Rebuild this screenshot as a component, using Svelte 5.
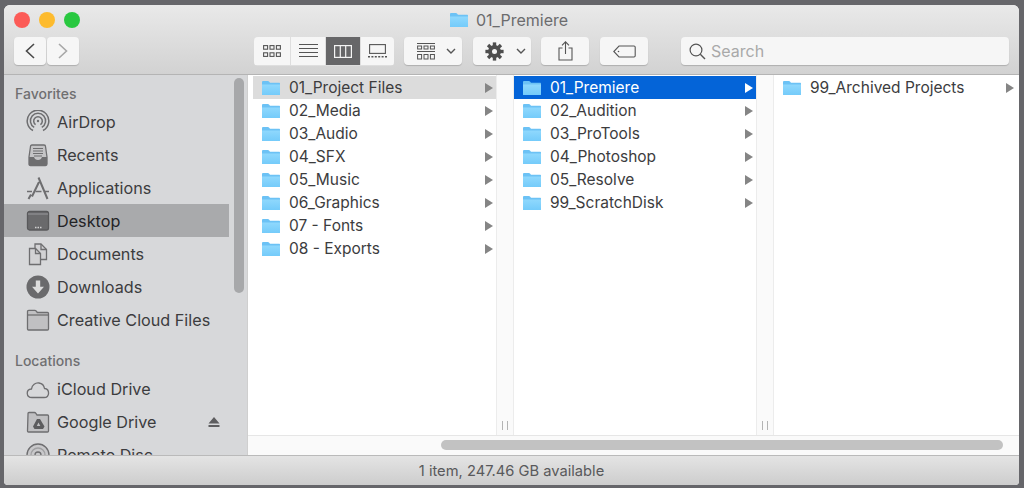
<script>
  const col1 = ["01_Project Files", "02_Media", "03_Audio", "04_SFX", "05_Music", "06_Graphics", "07 - Fonts", "08 - Exports"];
  const col2 = ["01_Premiere", "02_Audition", "03_ProTools", "04_Photoshop", "05_Resolve", "99_ScratchDisk"];
  const col3 = ["99_Archived Projects"];
  const columns = [
    { items: col1, sel: 0, cls: "gray" },
    { items: col2, sel: 0, cls: "blue" },
    { items: col3, sel: -1, cls: "" },
  ];
  const favorites = [
    { name: "AirDrop", icon: "airdrop" },
    { name: "Recents", icon: "recents" },
    { name: "Applications", icon: "apps" },
    { name: "Desktop", icon: "desktop", active: true },
    { name: "Documents", icon: "docs" },
    { name: "Downloads", icon: "down" },
    { name: "Creative Cloud Files", icon: "folder" },
  ];
  const locations = [
    { name: "iCloud Drive", icon: "cloud" },
    { name: "Google Drive", icon: "gdrive", eject: true },
    { name: "Remote Disc", icon: "disc" },
  ];
</script>

{#snippet folder()}
  <svg class="folder" width="20" height="16" viewBox="0 0 20 16">
    <defs>
      <linearGradient id="fg" x1="0" y1="0" x2="0" y2="1">
        <stop offset="0" stop-color="#8fd8fd" />
        <stop offset="1" stop-color="#74cbfa" />
      </linearGradient>
    </defs>
    <path d="M1 2.2C1 1.4 1.5 1 2.2 1h4.6c.7 0 1 .3 1.4 .8L9 2.8h9c.7 0 1 .4 1 1V14c0 .7-.4 1-1 1H2c-.7 0-1-.4-1-1z" fill="#6cc2f5" />
    <path d="M1 4.6h18V14c0 .7-.4 1-1 1H2c-.7 0-1-.4-1-1z" fill="url(#fg)" />
  </svg>
{/snippet}

{#snippet sideIcon(kind)}
  <svg class="sicon" width="24" height="24" viewBox="0 0 24 24" fill="none" stroke="#6e6e70" stroke-width="1.3">
    {#if kind === "airdrop"}
      <path d="M7 20.5A10.8 10.8 0 1 1 17 20.5" stroke-width="1.5" />
      <path d="M8.2 17.4A7.6 7.6 0 1 1 15.8 17.4" stroke-width="1.5" />
      <path d="M9.6 14.6A4.3 4.3 0 1 1 14.4 14.6" stroke-width="1.5" />
      <circle cx="12" cy="11" r="1.2" fill="#6e6e70" stroke="none" />
    {:else if kind === "recents"}
      <path d="M4.5 3.5c0-1 .5-1.5 1.5-1.5h12c1 0 1.5 .5 1.5 1.5L21 14v7c0 1-.5 1.5-1.5 1.5h-15C3.500 22.500 3 22 3 21v-7z" fill="#c4c4c6" />
      <path d="M3 14h5c.5 2 2 3 4 3s3.500-1 4-3h5v7c0 1-.5 1.500-1.500 1.500h-15C3.500 22.500 3 22 3 21z" fill="#6e6e70" stroke="none" />
      <path d="M7 5.500h10M7 8h10M7 10.500h10M8 13h8" stroke-width="1.1" />
    {:else if kind === "apps"}
      <path d="M12.500 1.500 21.500 23M13 6 6 20.500M2.500 23 5 18.500" stroke-width="2" />
      <path d="M1 15.500h5M9.500 15.500h6M18 15.500h5" stroke-width="1.6" />
    {:else if kind === "desktop"}
      <rect x="1.500" y="2.500" width="21" height="18.500" rx="2" fill="#6a6a6c" stroke="#59595b" />
      <path d="M2 5h20" stroke="#8a8a8c" />
      <path d="M9 18.500h1.500M11.500 18.500H13M14 18.500h1.500" stroke="#d0d0d0" stroke-width="1.600" />
    {:else if kind === "docs"}
      <path d="M9 2h6l5.500 5.500V17.500H9z" fill="#d2d2d4" />
      <path d="M15 2v5.500h5.500" />
      <path d="M3.500 6.500h6L14.500 11.500V22.500H3.500z" fill="#d2d2d4" />
      <path d="M9.500 6.500v5h5" />
    {:else if kind === "down"}
      <circle cx="12" cy="12" r="11.500" fill="#6a6a6c" stroke="none" />
      <path d="M9.800 5.500h4.400v6.300H18L12 18.500 6 11.800h3.800z" fill="#dcdcdc" stroke="none" />
    {:else if kind === "folder"}
      <path d="M1.500 5V3.500c0-.8 .4-1.200 1.200-1.200h6c.8 0 1.200 .3 1.600 .8l1 1.400h10.200c.7 0 1 .4 1 1V21c0 .7-.4 1-1 1H2.500c-.7 0-1-.4-1-1z" fill="#c0c0c2" />
      <path d="M1.500 7h21" />
    {:else if kind === "cloud"}
      <path d="M6 20.500c-6 0-6.500-8-.5-8.500C6 8 9.500 5.500 13 6c3 .4 5 2.500 5.500 5.500 5.500 .5 5.500 9-.5 9z" />
    {:else if kind === "gdrive"}
      <path d="M2 4.500V3.500c0-.7 .4-1 1-1h5.500c.7 0 1 .3 1.400 .8L11 5h10.500c.7 0 1 .4 1 1v15c0 .7-.4 1-1 1h-19c-.7 0-1-.4-1-1z" fill="#c0c0c2" />
      <path d="M11 9h3l4.500 7.500-1.500 2.500H8.500L7 16.500z" fill="#5c5c5e" stroke="none" />
      <path d="M12.500 12.500 10.800 16h3.500z" fill="#c0c0c2" stroke="none" />
    {:else}
      <circle cx="12" cy="12" r="11" fill="#c8c8ca" />
      <circle cx="12" cy="12" r="7" stroke="#a0a0a2" />
      <circle cx="12" cy="12" r="3" />
    {/if}
  </svg>
{/snippet}

{#snippet sideRow(item)}
  <div class="side-row" class:active={item.active}>
    {@render sideIcon(item.icon)}
    <span>{item.name}</span>
    {#if item.eject}
      <svg class="eject" width="12" height="12" viewBox="0 0 12 12"><path d="M6 1 11.500 7.500H.5zM.5 9h11v2H.5z" fill="#5e5e60" /></svg>
    {/if}
  </div>
{/snippet}

<div class="window">
  <header>
    <div class="lights">
      <i class="red"></i><i class="yellow"></i><i class="green"></i>
    </div>
    <div class="title">
      {@render folder()}
      <span>01_Premiere</span>
    </div>
    <div class="toolbar">
      <div class="nav">
        <button class="tb back" aria-label="Back">
          <svg width="12" height="16" viewBox="0 0 12 16"><path d="M10 1 2.500 8 10 15" fill="none" stroke="#4a4a4a" stroke-width="1.600" /></svg>
        </button>
        <button class="tb fwd" aria-label="Forward">
          <svg width="12" height="16" viewBox="0 0 12 16"><path d="M2 1 9.500 8 2 15" fill="none" stroke="#a8a8a8" stroke-width="1.600" /></svg>
        </button>
      </div>
      <div class="views">
        <button class="view" aria-label="Icons">
          <svg width="18" height="12" viewBox="0 0 18 12" fill="none" stroke="#555" stroke-width="1.100">
            <rect x=".6" y=".6" width="4" height="3.600" /><rect x="7" y=".6" width="4" height="3.600" /><rect x="13.400" y=".6" width="4" height="3.600" />
            <rect x=".6" y="7.800" width="4" height="3.600" /><rect x="7" y="7.800" width="4" height="3.600" /><rect x="13.400" y="7.800" width="4" height="3.600" />
          </svg>
        </button>
        <button class="view" aria-label="List">
          <svg width="19" height="14" viewBox="0 0 19 14" stroke="#555" stroke-width="1"><path d="M0 .5h19M0 4.500h19M0 8.500h19M0 12.500h19" /></svg>
        </button>
        <button class="view on" aria-label="Columns">
          <svg width="18" height="13" viewBox="0 0 18 13" fill="none" stroke="#f4f4f4" stroke-width="1.200"><rect x=".6" y=".6" width="16.800" height="11.800" /><path d="M6.300 .6v11.800M11.700 .6v11.800" /></svg>
        </button>
        <button class="view" aria-label="Gallery">
          <svg width="19" height="14" viewBox="0 0 19 14" fill="none" stroke="#555" stroke-width="1.100"><rect x="1.600" y=".6" width="15.800" height="8.800" /><path d="M0 12.800h2M3.400 12.800h2M6.800 12.800h2M10.200 12.800h2M13.600 12.800h2M17 12.800h2" stroke-width="1.600" /></svg>
        </button>
      </div>
      <button class="tb arrange" aria-label="Arrange">
        <svg width="18" height="17" viewBox="0 0 18 17" fill="none" stroke="#555" stroke-width="1"><path d="M0 .5h18M0 8.500h18" /><rect x=".6" y="3" width="4" height="3" /><rect x="7" y="3" width="4" height="3" /><rect x="13.400" y="3" width="4" height="3" /><rect x=".6" y="11.500" width="4" height="4.500" /><rect x="7" y="11.500" width="4" height="4.500" /><rect x="13.400" y="11.500" width="4" height="4.500" /></svg>
        <svg class="chev" width="10" height="6" viewBox="0 0 10 6"><path d="M1 1l4 4 4-4" fill="none" stroke="#555" stroke-width="1.400" /></svg>
      </button>
      <button class="tb gear" aria-label="Action">
        <svg width="19" height="19" viewBox="0 0 19 19">
          <g fill="#4e4e4e">
            <circle cx="9.500" cy="9.500" r="6.500" />
            {#each [0, 45, 90, 135, 180, 225, 270, 315] as a}
              <rect x="7.800" y=".4" width="3.400" height="4" transform="rotate({a} 9.500 9.500)" />
            {/each}
          </g>
          <circle cx="9.500" cy="9.500" r="2.500" fill="#f4f4f4" />
        </svg>
        <svg class="chev" width="10" height="6" viewBox="0 0 10 6"><path d="M1 1l4 4 4-4" fill="none" stroke="#555" stroke-width="1.400" /></svg>
      </button>
      <button class="tb share" aria-label="Share">
        <svg width="15" height="20" viewBox="0 0 15 20" fill="none" stroke="#555" stroke-width="1.100"><path d="M4.500 7H1v12h13V7h-3.500M7.500 13V1M4 4.300 7.500 .8 11 4.300" /></svg>
      </button>
      <button class="tb tag" aria-label="Tags">
        <svg width="23" height="13" viewBox="0 0 23 13" fill="none" stroke="#555" stroke-width="1.100"><path d="M6 1h15c.7 0 1.200 .5 1.200 1.200v8.600c0 .7-.5 1.200-1.200 1.200H6L.8 6.500z" /><circle cx="5.500" cy="6.500" r=".8" fill="#555" stroke="none" /></svg>
      </button>
      <div class="search">
        <svg width="17" height="17" viewBox="0 0 17 17" fill="none" stroke="#555" stroke-width="1.200"><circle cx="7" cy="7" r="5.900" /><path d="M11.300 11.300 16 16" stroke-width="1.400" /></svg>
        <span>Search</span>
      </div>
    </div>
  </header>

  <div class="main">
    <aside>
      <div class="side-head first">Favorites</div>
      {#each favorites as item}
        {@render sideRow(item)}
      {/each}
      <div class="side-head">Locations</div>
      {#each locations as item}
        {@render sideRow(item)}
      {/each}
      <div class="side-thumb"></div>
    </aside>

    <div class="browser">
      <div class="columns">
        {#each columns as col, c}
          <div class="column" class:last={c === 2}>
            <div class="rows">
              {#each col.items as name, i}
                <div class="row {i === col.sel ? col.cls : ''}">
                  {@render folder()}
                  <span class="name">{name}</span>
                  <i class="arrow"></i>
                </div>
              {/each}
            </div>
            {#if c < 2}
              <div class="handle"><b></b><b></b></div>
            {/if}
          </div>
        {/each}
      </div>
      <div class="hscroll"><div class="thumb"></div></div>
    </div>
  </div>

  <footer>1 item, 247.46 GB available</footer>
</div>

<style>
  :global(body) {
    background: #66666a;
  }
  .window {
    width: 1015px;
    height: 480px;
    margin: 5px 0 0 4px;
    display: flex;
    flex-direction: column;
    border-radius: 6px 6px 4px 4px;
    overflow: hidden;
    font-family: Inter, "Liberation Sans", sans-serif;
    color: #3a3a3c;
    background: #fff;
  }
  header {
    position: relative;
    height: 70px;
    flex: none;
    box-sizing: border-box;
    background: linear-gradient(#e9e9e9, #d2d2d2);
    border-bottom: 1px solid #b4b4b4;
    padding: 32px 0 0 10px;
  }
  .lights {
    position: absolute;
    left: 10px;
    top: 7px;
    display: flex;
    gap: 9px;
  }
  .lights i {
    width: 16px;
    height: 16px;
    border-radius: 50%;
  }
  .red { background: #fc5b57; }
  .yellow { background: #fdbb2e; }
  .green { background: #29c840; }
  .title {
    position: absolute;
    left: 445px;
    top: 5px;
    display: flex;
    align-items: center;
    gap: 7px;
    font-size: 16px;
    color: #6c6c6e;
  }
  .toolbar {
    display: flex;
    align-items: flex-start;
  }
  button {
    border: 0;
    padding: 0;
    margin: 0;
    background: #f6f6f6;
    display: flex;
    align-items: center;
    justify-content: center;
    height: 28px;
    box-shadow: 0 1px 1px rgba(0, 0, 0, 0.18);
  }
  .tb {
    border-radius: 4px;
  }
  .nav {
    display: flex;
    gap: 1px;
  }
  .back { width: 32px; }
  .fwd { width: 32px; }
  .views {
    display: flex;
    margin-left: 175px;
    border-radius: 4px;
    overflow: hidden;
    height: 29px;
    gap: 1px;
    background: #dedede;
  }
  .view {
    width: 34px;
    box-shadow: none;
  }
  .view:first-child { width: 36px; }
  .view:last-child { width: 33px; }
  .view.on { background: #666668; }
  .arrange, .gear {
    width: 58px;
    justify-content: flex-start;
    padding-left: 13px;
    box-sizing: border-box;
    gap: 11px;
  }
  .arrange { margin-left: 10px; }
  .gear { margin-left: 11px; gap: 12px; padding-left: 12px; }
  .share { width: 48px; margin-left: 10px; }
  .tag { width: 48px; margin-left: 11px; }
  .search {
    margin-left: 33px;
    width: 328px;
    height: 28px;
    box-sizing: border-box;
    padding-left: 8px;
    display: flex;
    align-items: center;
    gap: 5px;
    background: #f6f6f6;
    border-radius: 4px;
    box-shadow: 0 1px 1px rgba(0, 0, 0, 0.18);
    font-size: 16px;
    color: #a9a9a9;
  }
  .main {
    flex: 1;
    min-height: 0;
    display: flex;
  }
  aside {
    position: relative;
    width: 244px;
    flex: none;
    background: #d7d8da;
    overflow: hidden;
    border-right: 1px solid #cfcfcf;
    box-sizing: border-box;
  }
  .side-head {
    height: 20px;
    line-height: 20px;
    padding-left: 11px;
    margin-top: 15px;
    margin-bottom: 1px;
    font-size: 14px;
    font-weight: 500;
    color: #6f6f71;
  }
  .side-head.first {
    margin-top: 9px;
  }
  .side-row {
    width: 225px;
    height: 33px;
    display: flex;
    align-items: center;
    padding-left: 22px;
    box-sizing: border-box;
    gap: 7px;
    font-size: 16.2px;
    color: #3c3c3e;
  }
  .side-row.active {
    background: #a9aaac;
    color: #232325;
  }
  .sicon { flex: none; }
  .eject { margin-left: auto; margin-right: 9px; }
  .side-thumb {
    position: absolute;
    left: 230px;
    top: 3px;
    width: 10px;
    height: 215px;
    border-radius: 5px;
    background: #a7a8aa;
  }
  .browser {
    flex: 1;
    min-width: 0;
    display: flex;
    flex-direction: column;
    background: #fff;
  }
  .columns {
    flex: 1;
    min-height: 0;
    display: flex;
    padding-left: 5px;
  }
  .column {
    width: 260px;
    flex: none;
    display: flex;
  }
  .column:first-child {
    width: 261px;
  }
  .column.last {
    flex: 1;
    width: auto;
    padding-right: 2px;
  }
  .rows {
    flex: 1;
    min-width: 0;
    padding-top: 1px;
  }
  .row {
    height: 23px;
    display: flex;
    align-items: center;
    padding-left: 8px;
    gap: 8px;
    font-size: 15.5px;
    color: #3c3c3e;
  }
  .row .name { flex: 1; }
  .row.gray { background: #dcdcdc; }
  .row.blue { background: #0464d8; color: #fff; }
  .arrow {
    width: 0;
    height: 0;
    margin-right: 3px;
    border-left: 8px solid #858585;
    border-top: 5px solid transparent;
    border-bottom: 5px solid transparent;
  }
  .row.blue .arrow { border-left-color: #fff; }
  .handle {
    width: 18px;
    flex: none;
    box-sizing: border-box;
    background: #fafafa;
    border-left: 1px solid #ececec;
    border-right: 1px solid #ececec;
    display: flex;
    align-items: flex-end;
    justify-content: center;
    gap: 4px;
    padding-bottom: 5px;
  }
  .handle b {
    width: 1px;
    height: 9px;
    background: #b4b4b4;
  }
  .hscroll {
    height: 20px;
    flex: none;
    box-sizing: border-box;
    border-top: 1px solid #e6e6e6;
    background: #fafafa;
    padding: 4px 16px 0 193px;
  }
  .thumb {
    height: 10px;
    border-radius: 5px;
    background: #c2c2c2;
  }
  footer {
    height: 30px;
    flex: none;
    box-sizing: border-box;
    border-top: 1px solid #bababa;
    background: linear-gradient(#e4e4e4, #cdcdcd);
    display: flex;
    align-items: center;
    justify-content: center;
    font-size: 14.7px;
    color: #59595b;
  }
</style>
